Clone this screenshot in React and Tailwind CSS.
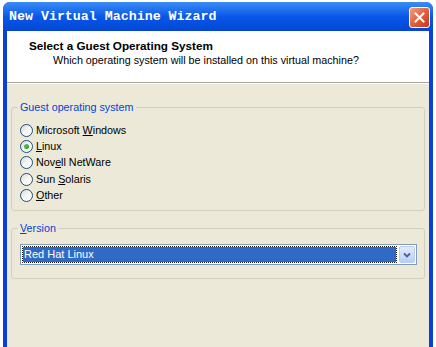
import React from "react";

const OPTIONS = [
  { pre: "Microsoft ", key: "W", post: "indows" },
  { pre: "", key: "L", post: "inux", checked: true },
  { pre: "Nov", key: "e", post: "ll NetWare" },
  { pre: "Sun ", key: "S", post: "olaris" },
  { pre: "", key: "O", post: "ther" },
];

function Radio({ checked }) {
  return (
    <span className="relative flex h-[13px] w-[13px] shrink-0 items-center justify-center rounded-full border border-[#1c5180] bg-gradient-to-br from-[#dcdcd5] via-[#f5f5f2] to-white">
      {checked && (
        <span className="h-[5px] w-[5px] rounded-full bg-gradient-to-br from-[#5ecb5e] to-[#1f9a1f]" />
      )}
    </span>
  );
}

function Group({ label, children, className = "" }) {
  return (
    <div
      className={`relative mx-[4px] rounded-[3px] border border-[#d0d0bf] ${className}`}
    >
      <span className="absolute -top-[8px] left-[6px] bg-[#ece9d8] px-[2px] text-[10.75px] leading-[14px] text-[#0046d5]">
        {label}
      </span>
      {children}
    </div>
  );
}

function CloseButton() {
  return (
    <div className="mt-[1px] flex h-[21px] w-[21px] items-center justify-center rounded-[3px] border border-white bg-gradient-to-br from-[#f0a084] via-[#e0603c] to-[#c23a1c]">
      <svg width="11" height="11" viewBox="0 0 11 11">
        <path
          d="M1.5 1.5 L9.5 9.5 M9.5 1.5 L1.5 9.5"
          stroke="white"
          strokeWidth="2"
          strokeLinecap="square"
        />
      </svg>
    </div>
  );
}

export default function App() {
  return (
    <div
      className="h-[347px] w-[436px] overflow-hidden bg-white pl-[3px] pt-[2px]"
      style={{ fontFamily: '"Liberation Sans", Arial, sans-serif' }}
    >
      <div className="flex h-[345px] w-[430px] flex-col overflow-hidden rounded-t-[7px] bg-[#0a3fd8]">
        {/* title bar */}
        <div className="flex h-[29px] shrink-0 items-center justify-between bg-gradient-to-b from-[#3b8cf5] via-[#0858e8] to-[#0446d4] pl-[6px] pr-[3px]">
          <span
            className="text-[13.3px] font-bold leading-none text-white"
            style={{ fontFamily: '"Liberation Mono", "DejaVu Sans Mono", monospace' }}
          >
            New Virtual Machine Wizard
          </span>
          <CloseButton />
        </div>

        {/* client */}
        <div className="mx-[4px] flex flex-1 flex-col bg-[#ece9d8]">
          <div className="h-[52px] shrink-0 border-b border-[#aca899] bg-white pl-[22px] pt-[8px]">
            <div className="text-[11.7px] font-bold leading-[13px] text-black">
              Select a Guest Operating System
            </div>
            <div className="mt-[2px] pl-[24px] text-[10.75px] leading-[13px] text-black">
              Which operating system will be installed on this virtual machine?
            </div>
          </div>
          <div className="h-px bg-white" />

          <Group label="Guest operating system" className="mt-[23px] pb-[7px] pt-[14px]">
            <div className="flex flex-col pl-[8px]">
              {OPTIONS.map((o) => (
                <div key={o.key} className="flex h-[16.3px] items-center gap-[3px]">
                  <Radio checked={o.checked} />
                  <span className="text-[10.75px] leading-[13px] text-black">
                    {o.pre}
                    <span className="underline underline-offset-1">{o.key}</span>
                    {o.post}
                  </span>
                </div>
              ))}
            </div>
          </Group>

          <Group
            label={
              <>
                <span className="underline underline-offset-1">V</span>ersion
              </>
            }
            className="mt-[17px] pb-[13px] pl-[8px] pr-[7px] pt-[15px]"
          >
            <div className="flex h-[21px] items-stretch border border-[#7f9db9] bg-white p-px">
              <div className="m-px flex flex-1 items-center bg-[#316ac5] pl-[1px] text-[11px] leading-none text-white outline outline-1 outline-dotted outline-[#1a1a1a]">
                Red Hat Linux
              </div>
              <div className="ml-[2px] flex w-[16px] items-center justify-center rounded-[2px] border border-[#b9cdf5] bg-gradient-to-b from-[#e3ecfd] to-[#b8cdf8]">
                <svg width="8" height="6" viewBox="0 0 8 6">
                  <path
                    d="M1 1.5 L4 4.5 L7 1.5"
                    fill="none"
                    stroke="#4d6185"
                    strokeWidth="1.8"
                  />
                </svg>
              </div>
            </div>
          </Group>
        </div>
      </div>
    </div>
  );
}
